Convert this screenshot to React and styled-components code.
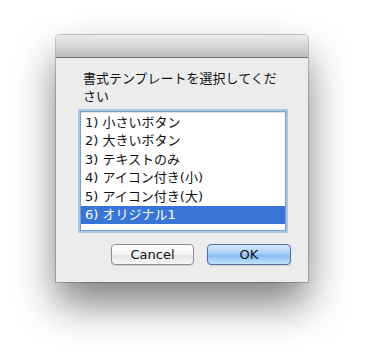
import React from 'react';
import styled, { createGlobalStyle } from 'styled-components';

const GlobalStyle = createGlobalStyle`
  html, body {
    margin: 0;
    padding: 0;
    background: #ffffff;
  }
  body {
    font-family: "DejaVu Sans", "Noto Sans CJK JP", sans-serif;
  }
`;

const Stage = styled.div`
  width: 366px;
  height: 360px;
  padding: 35px 0 0 56px;
  box-sizing: border-box;
`;

const Window = styled.div`
  width: 252px;
  height: 247px;
  background: #ececec;
  border-radius: 4px 4px 0 0;
  box-shadow: 0 22px 40px rgba(0, 0, 0, 0.5), 0 0 0 1px rgba(0, 0, 0, 0.2);
  display: flex;
  flex-direction: column;
  overflow: hidden;
`;

const TitleBar = styled.div`
  height: 22px;
  flex: none;
  background: linear-gradient(#ebebeb, #d5d5d5 50%, #bdbdbd);
  border-bottom: 1px solid #6e6e6e;
`;

const Body = styled.div`
  flex: 1;
  display: flex;
  flex-direction: column;
  padding: 11px 22px 0 24px;
`;

const Prompt = styled.p`
  margin: 0 0 6px 3px;
  width: 203px;
  font-family: "Noto Sans CJK JP", sans-serif;
  font-size: 13px;
  line-height: 18px;
  color: #111;
`;

const List = styled.ul`
  list-style: none;
  margin: 0;
  padding: 2px 0;
  width: 204px;
  height: 114px;
  background: #fff;
  border: 1px solid #7f9cc4;
  box-shadow: 0 0 0 2px #a7c6ea, inset 0 1px 1px rgba(0, 0, 0, 0.12);
  box-sizing: content-box;
  overflow: hidden;
`;

const Item = styled.li`
  height: 18.4px;
  line-height: 18.4px;
  padding-left: 4px;
  font-size: 13px;
  white-space: nowrap;
  color: ${p => (p.selected ? '#fff' : '#111')};
  background: ${p => (p.selected ? '#3875d7' : 'transparent')};
`;

const Buttons = styled.div`
  display: flex;
  justify-content: flex-end;
  gap: 13px;
  margin-top: 13px;
  margin-right: -5px;
`;

const Button = styled.button`
  width: ${p => (p.primary ? '84px' : '83px')};
  height: 21px;
  padding: 0;
  border-radius: 4px;
  font-family: "DejaVu Sans", sans-serif;
  font-size: 13px;
  color: #111;
  border: 1px solid ${p => (p.primary ? '#4f6f9e' : '#8e8e8e')};
  background: ${p =>
    p.primary
      ? 'linear-gradient(#d4e8fc, #a8d0f6 45%, #86bdf1 55%, #c3e2fd)'
      : 'linear-gradient(#ffffff, #f4f4f4 50%, #e6e6e6 55%, #f7f7f7)'};
  box-shadow: 0 1px 1px rgba(0, 0, 0, 0.12);
`;

const templates = [
  '1) 小さいボタン',
  '2) 大きいボタン',
  '3) テキストのみ',
  '4) アイコン付き(小)',
  '5) アイコン付き(大)',
  '6) オリジナル1',
];

const App = () => (
  <>
    <GlobalStyle />
    <Stage>
      <Window>
        <TitleBar />
        <Body>
          <Prompt>書式テンプレートを選択してください</Prompt>
          <List>
            {templates.map((t, i) => (
              <Item key={t} selected={i === templates.length - 1}>
                {t}
              </Item>
            ))}
          </List>
          <Buttons>
            <Button>Cancel</Button>
            <Button primary>OK</Button>
          </Buttons>
        </Body>
      </Window>
    </Stage>
  </>
);

export default App;
